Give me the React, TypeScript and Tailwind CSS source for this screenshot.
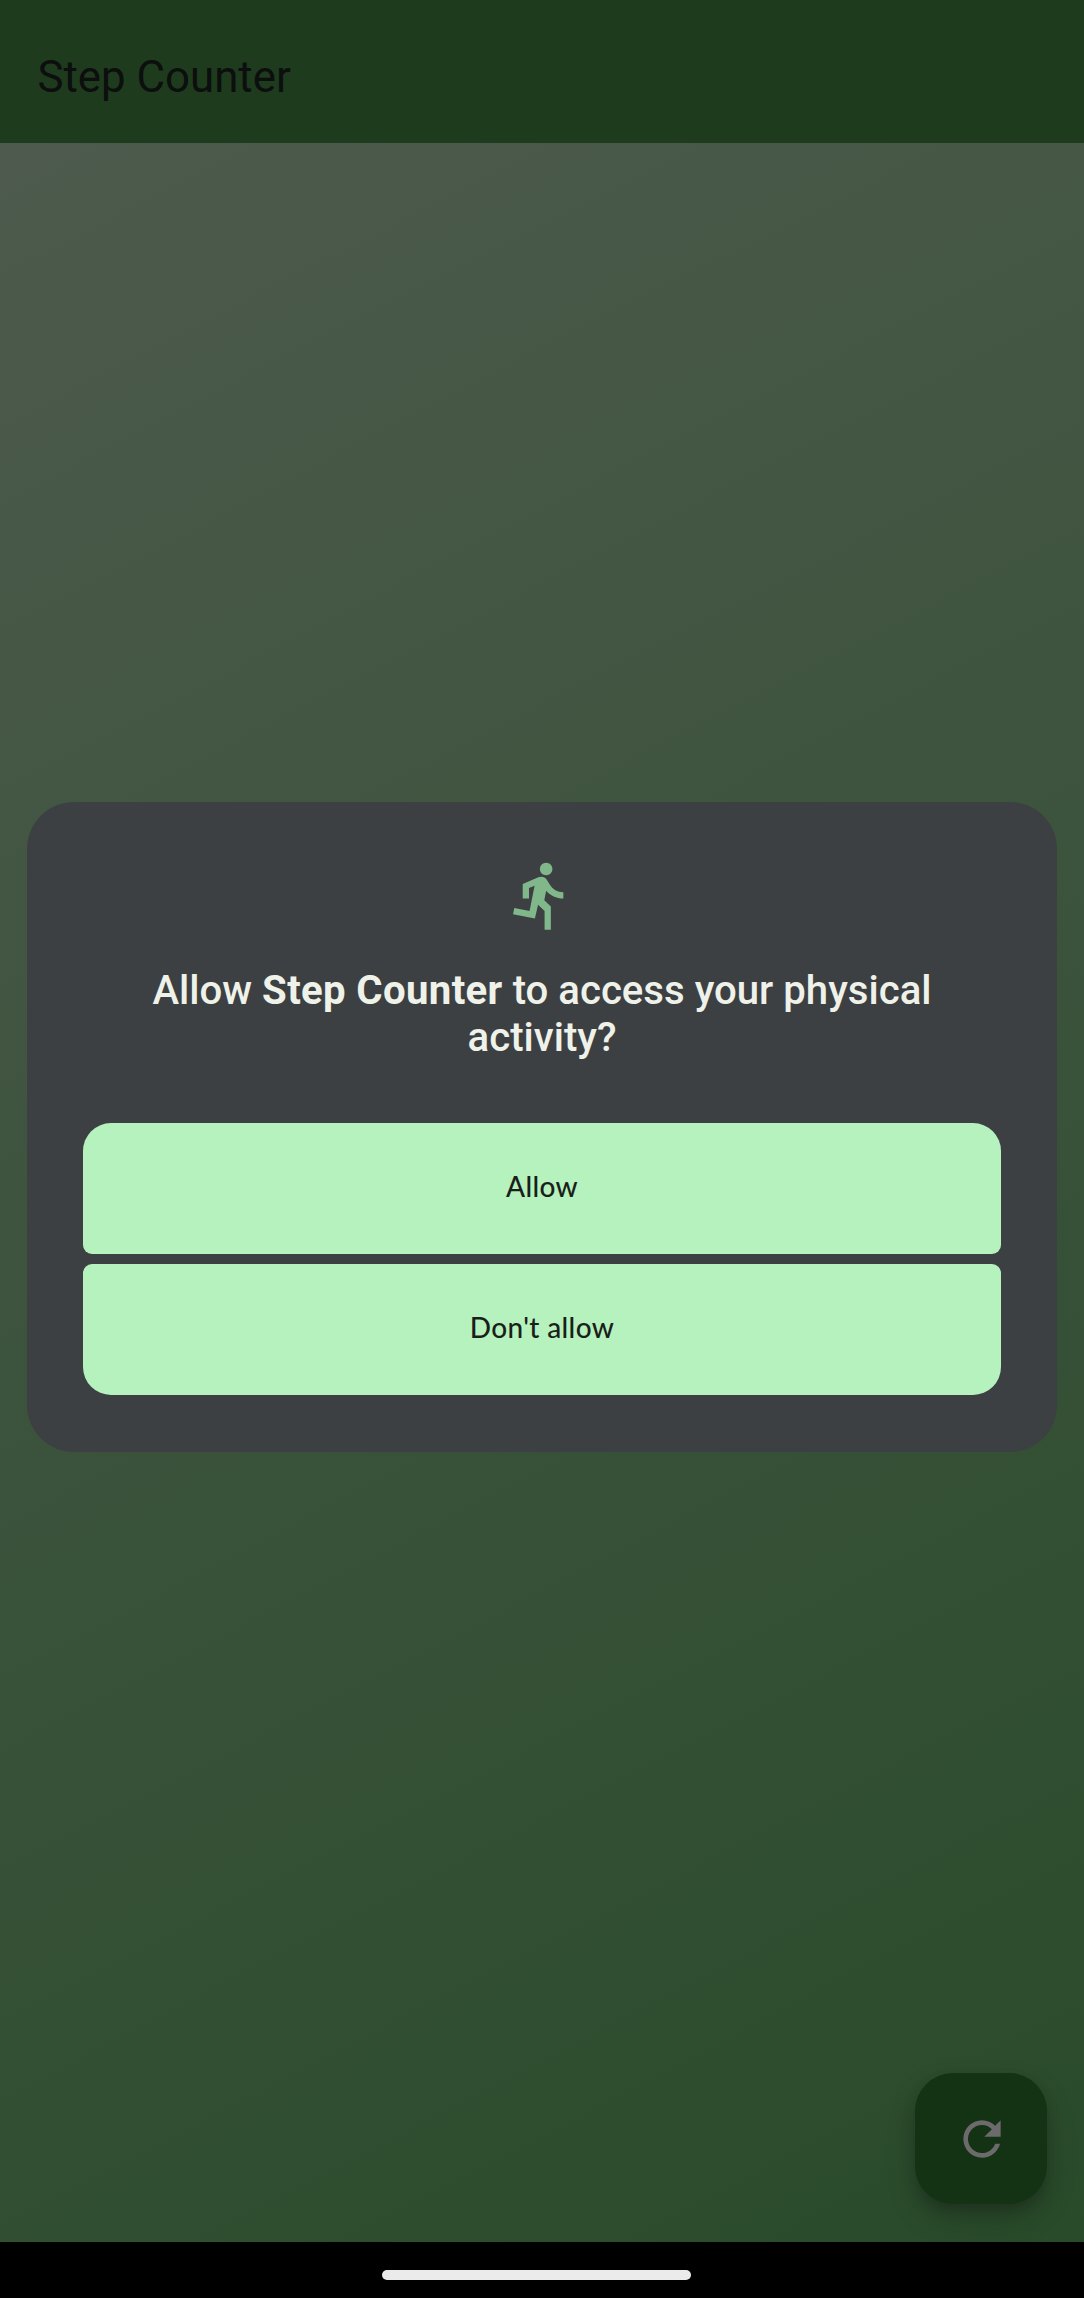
function RunIcon() {
  return (
    <svg viewBox="0 0 24 24" className="mr-[2px] h-[75px] w-[75px] fill-[#81b88b]">
      <path d="M13.49 5.48c1.1 0 2-.9 2-2s-.9-2-2-2-2 .9-2 2 .9 2 2 2zm-3.6 13.9l1-4.4 2.1 2v6h2v-7.5l-2.1-2 .6-3c1.3 1.5 3.3 2.5 5.5 2.5v-2c-1.9 0-3.5-1-4.3-2.4l-1-1.6c-.4-.6-1-1-1.7-1-.3 0-.5.1-.8.1l-5.2 2.2v4.7h2v-3.4l1.8-.7-1.6 8.1-4.9-1-.4 2 7 1.4z" />
    </svg>
  );
}

function RefreshIcon() {
  return (
    <svg viewBox="0 0 24 24" className="ml-[2px] h-[56px] w-[56px] fill-[#6c6a6c]">
      <path d="M17.65 6.35C16.2 4.9 14.21 4 12 4c-4.42 0-7.99 3.58-7.99 8s3.57 8 7.99 8c3.73 0 6.84-2.55 7.73-6h-2.08c-.82 2.33-3.04 4-5.65 4-3.31 0-6-2.69-6-6s2.69-6 6-6c1.66 0 3.14.69 4.22 1.78L13 11h7V4l-2.35 2.35z" />
    </svg>
  );
}

function PermissionDialog() {
  return (
    <div className="flex h-[650px] w-full flex-col items-center rounded-[47px] bg-[#3d4043] px-14 pt-14">
      <RunIcon />
      <h2 className="mt-[34px] text-center text-[40.15px] leading-[47px] font-medium text-[#eff2e9]">
        Allow <b className="font-bold tracking-[0.35px]">Step Counter</b> to access your physical
        <br />
        activity?
      </h2>
      <div className="mt-[62px] flex w-full flex-col gap-[10px] font-['Lato',sans-serif] text-[28px] font-medium tracking-[0.35px] text-[#1a1f1a]">
        <button className="h-[131px] w-full rounded-t-[28px] rounded-b-[9px] bg-[#b6f2be] pb-[5px]">Allow</button>
        <button className="h-[131px] w-full rounded-t-[9px] rounded-b-[28px] bg-[#b6f2be] pb-[5px]">Don't allow</button>
      </div>
    </div>
  );
}

export default function App() {
  return (
    <div className="flex h-[2298px] w-[1084px] flex-col overflow-hidden bg-black font-['Roboto',sans-serif]">
      <header className="flex h-[143px] shrink-0 items-center bg-[#1e3b1e] pt-[12px] pl-[37.5px]">
        <h1 className="text-[43.8px] leading-none text-[#0d0e0e]">Step Counter</h1>
      </header>
      <main className="relative flex h-[2099px] shrink-0 flex-col bg-[linear-gradient(152.7deg,#4d5a4d_0%,#294b2a_100%)] px-[27px] pt-[659px]">
        <PermissionDialog />
        <button className="absolute right-[37.3px] bottom-[38px] flex h-[131px] w-[131.4px] items-center justify-center rounded-[38px] bg-[#143214] shadow-[0_8px_14px_-2px_rgba(20,25,20,0.35),0_14px_28px_rgba(20,25,20,0.22)]">
          <RefreshIcon />
        </button>
      </main>
      <footer className="flex h-14 shrink-0 justify-center pt-[27.5px] pr-[11px]">
        <div className="h-[10px] w-[309px] rounded-full bg-[#ebebeb]" />
      </footer>
    </div>
  );
}
